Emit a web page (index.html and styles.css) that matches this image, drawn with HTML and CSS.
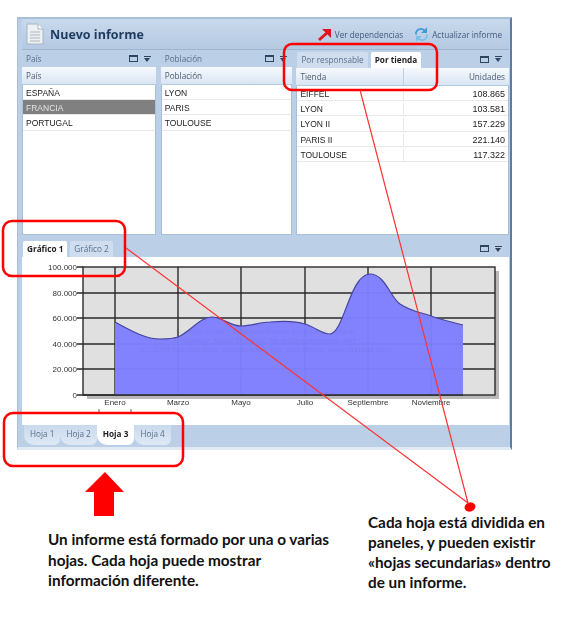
FILE: index.html
```html
<!DOCTYPE html>
<html lang="es">
<head>
    <meta charset="UTF-8">
    <title>Nuevo informe</title>
    <link rel="stylesheet" href="styles.css">
</head>
<body>
    <div class="window">
        <div class="toolbar">
            <svg class="doc-icon" width="18" height="22" viewBox="0 0 18 22">
                <path d="M1 1h11l5 5v15H1z" fill="#eef1f4" stroke="#a9b4c0"/>
                <path d="M12 1v5h5" fill="#fff" stroke="#a9b4c0"/>
                <path d="M4 9h10M4 12h10M4 15h10M4 18h10" stroke="#ccd2d6" stroke-width="2"/>
            </svg>
            <h1>Nuevo informe</h1>
            <span class="tool tool-deps">Ver dependencias</span>
            <svg class="refresh-icon" width="17" height="17" viewBox="0 0 17 17">
                <path d="M2 8a6 6 0 0 1 10-4.500L14 1v6H8l2.500-2.200A4 4 0 0 0 4 9z" fill="#3f9bd8"/>
                <path d="M15 9a6 6 0 0 1-10 4.500L3 16v-6h6l-2.500 2.200A4 4 0 0 0 13 8z" fill="#7cc0ea"/>
            </svg>
            <span class="tool">Actualizar informe</span>
        </div>

        <div class="panels">
            <section class="panel panel-pais">
                <div class="panel-head">
                    <span>País</span>
                    <span class="panel-btns"><i class="btn-max"></i><i class="btn-menu"></i></span>
                </div>
                <div class="col-head"><span>País</span></div>
                <div class="row"><span>ESPAÑA</span></div>
                <div class="row selected"><span>FRANCIA</span></div>
                <div class="row"><span>PORTUGAL</span></div>
            </section>

            <section class="panel panel-poblacion">
                <div class="panel-head">
                    <span>Población</span>
                    <span class="panel-btns"><i class="btn-max"></i><i class="btn-menu"></i></span>
                </div>
                <div class="col-head"><span>Población</span></div>
                <div class="row"><span>LYON</span></div>
                <div class="row"><span>PARIS</span></div>
                <div class="row"><span>TOULOUSE</span></div>
            </section>

            <section class="panel panel-tienda">
                <div class="panel-head panel-head-tabs head-tall">
                    <div class="tabs">
                        <span class="tab">Por responsable</span>
                        <span class="tab active">Por tienda</span>
                    </div>
                    <span class="panel-btns"><i class="btn-max"></i><i class="btn-menu"></i></span>
                </div>
                <div class="col-head split"><span class="name">Tienda</span><span class="num">Unidades</span></div>
                <div class="row split"><span class="name">EIFFEL</span><span class="num">108.865</span></div>
                <div class="row split"><span class="name">LYON</span><span class="num">103.581</span></div>
                <div class="row split"><span class="name">LYON II</span><span class="num">157.229</span></div>
                <div class="row split"><span class="name">PARIS II</span><span class="num">221.140</span></div>
                <div class="row split"><span class="name">TOULOUSE</span><span class="num">117.322</span></div>
            </section>
        </div>

        <section class="chart-panel">
            <div class="panel-head panel-head-tabs">
                <div class="tabs">
                    <span class="tab active">Gráfico 1</span>
                    <span class="tab">Gráfico 2</span>
                </div>
                <span class="panel-btns"><i class="btn-max"></i><i class="btn-menu"></i></span>
            </div>
            <div class="chart-body">
                <svg class="chart" width="487" height="168" viewBox="22 257 487 168">
                    <rect x="87" y="271" width="412" height="128" fill="#8a8a8a" opacity="0.6"/>
                    <rect class="grid-box" x="83" y="267" width="412" height="128"/>
                    <path class="grid" d="M115 267V395M178 267V395M241 267V395M305 267V395M368 267V395M431 267V395"/>
                    <path class="grid" d="M83 293H495M83 318H495M83 344H495M83 369H495"/>
                    <path class="grid" d="M77 267H83M77 293H83M77 318H83M77 344H83M77 369H83M77 395H83"/>
                    <path class="area" d="M115 322C130 330 145 339 160 339C168 339 172 339 178 337C190 332 200 317 212 317C222 317 230 326 241 326C252 326 260 322 270 322C282 321 296 321 305 324C315 327 322 334 330 334C344 333 350 274 370 274C385 274 390 297 400 304C412 312 420 312 431 316C442 320 452 322 463 325V395H115Z"/>
                    <path class="curve" d="M115 322C130 330 145 339 160 339C168 339 172 339 178 337C190 332 200 317 212 317C222 317 230 326 241 326C252 326 260 322 270 322C282 321 296 321 305 324C315 327 322 334 330 334C344 333 350 274 370 274C385 274 390 297 400 304C412 312 420 312 431 316C442 320 452 322 463 325"/>
                    <path class="grid" d="M83 395H463"/>
                    <text class="axis" x="77" y="270" text-anchor="end">100.000</text>
                    <text class="axis" x="77" y="296" text-anchor="end">80.000</text>
                    <text class="axis" x="77" y="321" text-anchor="end">60.000</text>
                    <text class="axis" x="77" y="347" text-anchor="end">40.000</text>
                    <text class="axis" x="77" y="372" text-anchor="end">20.000</text>
                    <text class="axis" x="77" y="398" text-anchor="end">0</text>
                    <text class="axis" x="115" y="405" text-anchor="middle">Enero</text>
                    <text class="axis" x="178" y="405" text-anchor="middle">Marzo</text>
                    <text class="axis" x="241" y="405" text-anchor="middle">Mayo</text>
                    <text class="axis" x="305" y="405" text-anchor="middle">Julio</text>
                    <text class="axis" x="368" y="405" text-anchor="middle">Septiembre</text>
                    <text class="axis" x="431" y="405" text-anchor="middle">Noviembre</text>
                    <path d="M99 409v4h13M118 413h13v-4" fill="none" stroke="#555"/>
                    <text class="watermark" x="265" y="334" text-anchor="middle">Dundas Chart - Windows Forms Enterprise Edition</text>
                    <text class="watermark" x="265" y="343" text-anchor="middle">Evaluation Mode Enabled, for testing purposes only</text>
                    <text class="watermark" x="265" y="352" text-anchor="middle">(C) 2007 Dundas Data Visualization, Inc. and others, www.dundas.com</text>
                </svg>
            </div>
        </section>

        <div class="sheets">
            <span class="sheet">Hoja 1</span>
            <span class="sheet">Hoja 2</span>
            <span class="sheet active">Hoja 3</span>
            <span class="sheet">Hoja 4</span>
        </div>
    </div>

    <div class="notes">
        <p class="note note-left">Un informe está formado por una o varias hojas. Cada hoja puede mostrar información diferente.</p>
        <p class="note note-right">Cada hoja está dividida en paneles, y pueden existir «hojas secundarias» dentro de un informe.</p>
    </div>

    <!-- callouts drawn over the screenshot -->
    <svg class="callouts" width="567" height="619" viewBox="0 0 567 619">
        <g fill="none" stroke="#f00" stroke-width="2.500">
            <rect x="284" y="44" width="153" height="46" rx="8"/>
            <rect x="3" y="221" width="122" height="55" rx="9"/>
            <rect x="4" y="413" width="179" height="53" rx="9"/>
        </g>
        <path d="M360 90L468 503M126 248L468 503" stroke="#f33" stroke-width="1.200"/>
        <ellipse cx="470" cy="507" rx="5.500" ry="4.500" fill="#f00" transform="rotate(-20 470 507)"/>
        <path d="M105 472L124 492H114V516H94V492H85Z" fill="#f00"/>
        <path d="M319 40L328 32" fill="none" stroke="#e0141c" stroke-width="3"/>
        <path d="M322 29H331V38Z" fill="#e0141c"/>
    </svg>
</body>
</html>
```

FILE: styles.css
```css
body {
    margin: 0;
    background-color: #ffffff;
    font-family: "Open Sans", "Noto Sans", sans-serif;
    font-size: 8.200px;
    color: #333;
    overflow: hidden;
}

/* Main window */
.window {
    box-sizing: border-box;
    width: 495px;
    height: 433px;
    margin: 17px 0 0 17px;
    padding: 0 1px 3px 4px;
    background-color: #bbcfe6;
    border-top: 2px solid #a9bfd8;
    border-left: 1px solid #a9bfd8;
    border-right: 2px solid #5f7c9f;
    border-bottom: 3px solid #e1e9f3;
    filter: blur(0.35px);
}

.toolbar {
    display: flex;
    align-items: center;
    height: 30px;
    padding: 0 7px 0 4px;
    background: linear-gradient(#c9d9ec, #b4c9e2);
    border-bottom: 1px solid #9fb6d1;
}

.doc-icon {
    margin-right: 6px;
}

h1 {
    flex: 1;
    margin: 0;
    font-size: 12.500px;
    font-weight: 700;
    color: #1f3a5f;
}

.tool {
    color: #41597a;
}

.tool-deps {
    margin-right: 10px;
}

.refresh-icon {
    margin-right: 2px;
}

/* Top row of panels */
.panels {
    display: flex;
    gap: 5px;
    height: 185px;
}

.panel {
    display: flex;
    flex-direction: column;
    background-color: #ffffff;
    box-shadow: inset 0 0 0 1px #a9bfd8;
}

.panel-pais {
    width: 134px;
}

.panel-poblacion {
    width: 132px;
}

.panel-tienda {
    width: 213px;
    margin-left: -1px;
}

.panel-head {
    display: flex;
    align-items: center;
    justify-content: space-between;
    height: 17px;
    flex: none;
    padding: 0 5px 0 4px;
    background-color: #bbcfe6;
    color: #5a6f8a;
}

.panel-head-tabs {
    align-items: flex-end;
    padding: 0 7px 0 1px;
}

.head-tall {
    height: 18px;
}

.panel-btns {
    display: flex;
    align-items: center;
    gap: 6px;
    align-self: center;
}

.btn-max {
    display: block;
    box-sizing: border-box;
    width: 9px;
    height: 7px;
    border: 1px solid #2d4560;
    border-top-width: 2px;
}

.btn-menu {
    display: block;
    width: 7px;
}

.btn-menu::before {
    content: "";
    display: block;
    height: 1px;
    margin-bottom: 1px;
    background-color: #2d4560;
}

.btn-menu::after {
    content: "";
    display: block;
    width: 0;
    height: 0;
    border-left: 3.500px solid transparent;
    border-right: 3.500px solid transparent;
    border-top: 4px solid #2d4560;
}

.tabs {
    display: flex;
    gap: 3px;
}

.tab {
    height: 16px;
    line-height: 16px;
    padding: 0 4px;
    background-color: #cfddee;
    border-radius: 2px 2px 0 0;
    color: #5a6f8a;
}

.tab.active {
    background-color: #ffffff;
    color: #222;
    font-weight: 700;
}

.col-head {
    display: flex;
    justify-content: space-between;
    align-items: center;
    flex: none;
    height: 17px;
    padding: 0 4px;
    background: linear-gradient(#f6f9fd, #d9e5f3);
    border-bottom: 1px solid #b4c8e0;
    color: #4c5c70;
}

.row {
    display: flex;
    justify-content: space-between;
    align-items: center;
    flex: none;
    height: 12.200px;
    margin: 0 1px;
    padding: 2px 3px 0;
    border-bottom: 1px solid #e8e8e8;
    font-family: "Liberation Sans", Arial, sans-serif;
    font-size: 8.500px;
    color: #222;
}

.row.selected {
    background-color: #808080;
    color: #e4e4e4;
}

.split {
    align-items: stretch;
}

.split .name {
    display: flex;
    align-items: center;
    width: 103px;
    border-right: 1px solid #e8e8e8;
}

.col-head.split .name {
    border-right-color: #bccfe4;
}

.split .num {
    display: flex;
    align-items: center;
}

.row .num {
    font-size: 9px;
}

/* Chart panel */
.chart-panel {
    margin-top: 5px;
    background-color: #ffffff;
}

.chart-body {
    height: 168px;
}

.chart {
    display: block;
}

.grid-box {
    fill: #e0e0e0;
    stroke: #2a2a2a;
    stroke-width: 1.400;
}

.grid {
    fill: none;
    stroke: #2a2a2a;
    stroke-width: 1.400;
}

.area {
    fill: #7f7fff;
    fill-opacity: 0.97;
}

.curve {
    fill: none;
    stroke: #45459f;
    stroke-width: 1.200;
}

.axis {
    font-family: "Liberation Sans", Arial, sans-serif;
    font-size: 8px;
    fill: #333;
}

.watermark {
    font-family: "Liberation Sans", Arial, sans-serif;
    font-size: 8px;
    fill: #000000;
    fill-opacity: 0.05;
}

/* Sheet tabs */
.sheets {
    display: flex;
    padding-left: 2px;
}

.sheet {
    height: 20px;
    line-height: 18px;
    padding: 0 6px;
    background: linear-gradient(#c9d9ec, #dfe9f5);
    border-radius: 0 0 6px 10px;
    color: #5a6f8a;
}

.sheet.active {
    background-color: #ffffff;
    background-image: none;
    color: #222;
    font-weight: 700;
}

/* Explanation text */
.notes {
    display: flex;
    font-family: Lato, "Noto Sans", sans-serif;
    font-weight: 700;
    font-size: 15.300px;
    color: #111;
}

.note {
    margin: 0;
}

.note-left {
    flex: none;
    width: 290px;
    margin: 79px 0 0 48px;
    line-height: 20.500px;
}

.note-right {
    flex: none;
    width: 195px;
    margin: 62px 0 0 30px;
    line-height: 20px;
}

.callouts {
    position: absolute;
    left: 0;
    top: 0;
    pointer-events: none;
}
```
